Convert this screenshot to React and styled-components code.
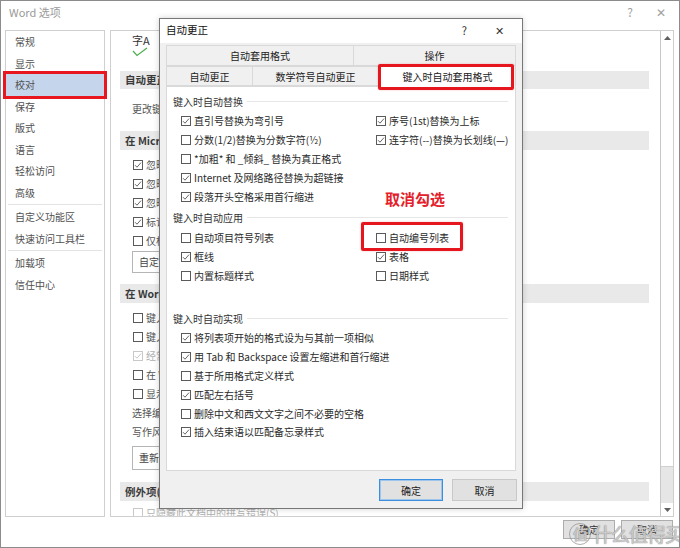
import React from "react";
import styled, { createGlobalStyle } from "styled-components";

const FONT = `"Noto Sans CJK SC", "Noto Sans", sans-serif`;

const Global = createGlobalStyle`
  html, body { margin: 0; padding: 0; background: #fff; }
  body { font-family: ${FONT}; }
  * { box-sizing: border-box; }
`;

const Window = styled.div`
  position: relative;
  width: 680px;
  height: 548px;
  border: 1px solid #8c8c8c;
  background: #fff;
  display: flex;
  flex-direction: column;
  font-family: ${FONT};
  font-size: 10px;
  color: #444;
  overflow: hidden;
`;

const TitleBar = styled.div`
  height: 29px;
  flex: none;
  display: flex;
  align-items: flex-start;
  padding: 4px 13px 0 8px;
  font-size: 11px;
  line-height: 14px;
  color: #9a9a9a;
`;

const TitleControls = styled.div`
  margin-left: auto;
  display: flex;
  gap: 23px;
  color: #a0a0a0;
  font-size: 12px;
`;

const Body = styled.div`
  display: flex;
  gap: 5px;
  height: 487px;
  flex: none;
  padding: 0 5px 0 4px;
`;

const Nav = styled.div`
  width: 100px;
  flex: none;
  border: 1px solid #cfcfcf;
  display: flex;
  flex-direction: column;
`;

const NavItem = styled.div`
  height: 21.5px;
  line-height: 21.5px;
  padding-left: 9px;
  color: #505050;
  font-size: 10px;
  background: ${(p) => (p.$active ? "#c5d6ec" : "transparent")};
  outline: ${(p) => (p.$active ? "3px solid #e8161e" : "none")};
  outline-offset: 0px;
`;

const NavSep = styled.div`
  height: 1px;
  background: #e3e3e3;
  margin: 1px 2px;
`;

const MainPanel = styled.div`
  flex: 1;
  border: 1px solid #cfcfcf;
  display: flex;
  overflow: hidden;
`;

const MainContent = styled.div`
  flex: 1;
  min-width: 0;
  padding: 0 11px 0 9px;
  display: flex;
  flex-direction: column;
  white-space: nowrap;
  overflow: hidden;
`;

const IconBlock = styled.div`
  margin: 3px 0 0 12px;
  height: 28px;
  display: flex;
  flex-direction: column;
  align-items: flex-start;
  color: #333;
  font-size: 11px;
  line-height: 13px;
`;

const Bar = styled.div`
  margin-top: ${(p) => p.$mt}px;
  height: ${(p) => p.$h || 19}px;
  line-height: ${(p) => p.$h || 19}px;
  background: #e9e9e9;
  padding-left: 5px;
  font-weight: bold;
  font-size: 10.5px;
  color: #3a3a3a;
  flex: none;
`;

const PanelText = styled.div`
  margin-top: ${(p) => p.$mt || 0}px;
  height: 19px;
  line-height: 19px;
  padding-left: 12px;
  color: #555;
  flex: none;
`;

const PanelRow = styled.div`
  margin-top: ${(p) => p.$mt || 0}px;
  height: 19px;
  display: flex;
  align-items: center;
  gap: 3px;
  padding-left: 13px;
  color: ${(p) => (p.$faded ? "#b0b0b0" : "#555")};
  flex: none;
`;

const PanelButton = styled.div`
  margin: ${(p) => p.$mt}px 0 0 12px;
  height: ${(p) => p.$h || 22}px;
  line-height: ${(p) => (p.$h || 22) - 2}px;
  border: 1px solid #b5b5b5;
  background: #fff;
  padding: 0 6px;
  align-self: flex-start;
  color: #444;
  flex: none;
`;

const ScrollBar = styled.div`
  width: 13px;
  flex: none;
  border-left: 1px solid #c8c8c8;
  background: #e6e6e6;
  display: flex;
  flex-direction: column;
`;

const ScrollArrow = styled.div`
  height: 13px;
  background: #fff;
  display: flex;
  align-items: center;
  justify-content: center;
  flex: none;
`;

const ScrollThumb = styled.div`
  height: 423px;
  background: #fff;
  border-bottom: 1px solid #d0d0d0;
  flex: none;
`;

const Spacer = styled.div`
  flex: 1;
`;

const Footer = styled.div`
  flex: 1;
  display: flex;
  justify-content: flex-end;
  align-items: flex-start;
  gap: 6px;
  padding: 3px 6px 0 0;
`;

const FooterButton = styled.div`
  width: 52px;
  height: 19px;
  line-height: 17px;
  text-align: center;
  border: 1px solid #adadad;
  background: #e1e1e1;
  color: #333;
`;

const Watermark = styled.div`
  position: absolute;
  right: -4px;
  bottom: 1px;
  display: flex;
  align-items: center;
  gap: 2px;
  font-size: 19px;
  line-height: 24px;
  color: rgba(255, 255, 255, 0.55);
  text-shadow: 0 0 1px #8a8a8a, 0 0 1px #8a8a8a;
  pointer-events: none;
  letter-spacing: -1px;
`;

const WaterCircle = styled.span`
  width: 22px;
  height: 22px;
  border-radius: 50%;
  border: 1px solid rgba(140, 140, 140, 0.7);
  display: inline-flex;
  align-items: center;
  justify-content: center;
  font-size: 15px;
`;

/* ---------- dialog ---------- */

const Dialog = styled.div`
  position: absolute;
  left: 158px;
  top: 17px;
  width: 364px;
  height: 491px;
  border: 1px solid #777;
  background: #f0f0f0;
  box-shadow: 0 0 6px rgba(0, 0, 0, 0.18);
  display: flex;
  flex-direction: column;
  color: #222;
`;

const DialogTitle = styled.div`
  height: 24px;
  flex: none;
  background: #fff;
  display: flex;
  align-items: center;
  padding: 0 18px 3px 6px;
  font-size: 10.5px;
  color: #111;
`;

const DialogControls = styled.div`
  margin-left: auto;
  display: flex;
  align-items: center;
  gap: 28px;
  color: #333;
  font-size: 11px;
`;

const Tabs = styled.div`
  padding: 2px 6px 0 6px;
  display: flex;
  flex-direction: column;
  flex: none;
`;

const TabRow = styled.div`
  display: flex;
  height: ${(p) => p.$h}px;
  align-items: flex-end;
`;

const Tab = styled.div`
  width: ${(p) => p.$w}px;
  height: ${(p) => (p.$active ? p.$h + 2 : p.$h)}px;
  margin-bottom: ${(p) => (p.$active ? -1 : 0)}px;
  position: relative;
  z-index: ${(p) => (p.$active ? 2 : 1)};
  display: flex;
  align-items: center;
  justify-content: center;
  border: 1px solid #d9d9d9;
  border-left-width: ${(p) => (p.$first || p.$active ? 1 : 0)}px;
  border-bottom-color: ${(p) => (p.$active ? "#fff" : "#d9d9d9")};
  background: ${(p) => (p.$active ? "#fff" : "#f0f0f0")};
  font-size: 10px;
  color: #222;
`;

const TabPanel = styled.div`
  margin: 0 6px;
  height: 385px;
  flex: none;
  background: #fff;
  border: 1px solid #d9d9d9;
  padding: 6px 0 0 6px;
  display: flex;
  flex-direction: column;
`;

const SectionHeader = styled.div`
  margin-top: ${(p) => p.$mt || 0}px;
  height: 16px;
  display: flex;
  align-items: center;
  font-size: 10px;
  color: #333;
  padding-right: 7px;
  &::after {
    content: "";
    flex: 1;
    height: 1px;
    background: #e6e6e6;
    margin-left: 4px;
  }
`;

const OptionGrid = styled.div`
  margin-top: ${(p) => p.$mt || 1}px;
  padding-left: 8px;
  display: grid;
  grid-template-columns: 195px 1fr;
  grid-auto-rows: 18.8px;
`;

const Option = styled.div`
  grid-column: ${(p) => p.$col || "auto"};
  display: flex;
  align-items: center;
  gap: 3px;
  font-size: 10px;
  line-height: 14px;
  color: #2a2a2a;
  white-space: nowrap;
`;

const Box = styled.span`
  width: 10px;
  height: 10px;
  flex: none;
  border: 1px solid ${(p) => (p.$faded ? "#c8c8c8" : "#5a5a5a")};
  background: #fff;
  display: inline-flex;
  align-items: center;
  justify-content: center;
`;

const DialogButtons = styled.div`
  margin-top: 8px;
  display: flex;
  justify-content: flex-end;
  gap: 9px;
  padding-right: 5px;
`;

const DialogButton = styled.div`
  width: ${(p) => p.$w}px;
  height: 22px;
  display: flex;
  align-items: center;
  justify-content: center;
  background: #e1e1e1;
  border: 1px solid ${(p) => (p.$primary ? "#3c8fde" : "#c8c8c8")};
  box-shadow: ${(p) => (p.$primary ? "inset 0 0 0 1px #9ec5ec" : "none")};
  font-size: 10px;
  color: #222;
`;

const RedBox = styled.div`
  position: absolute;
  left: ${(p) => p.$x}px;
  top: ${(p) => p.$y}px;
  width: ${(p) => p.$w}px;
  height: ${(p) => p.$h}px;
  border: 3px solid #e6161f;
  border-radius: 2px;
  box-shadow: 0 0 2px rgba(230, 22, 31, 0.3);
  pointer-events: none;
  z-index: 5;
`;

const Annotation = styled.div`
  position: absolute;
  left: 225px;
  top: 170px;
  font-size: 15px;
  line-height: 20px;
  font-weight: bold;
  color: #e4202a;
  z-index: 5;
`;

function Check({ faded }) {
  return (
    <svg width="8" height="8" viewBox="0 0 8 8">
      <polyline
        points="1,4.2 3,6.2 7,1.6"
        fill="none"
        stroke={faded ? "#c0c0c0" : "#555"}
        strokeWidth="0.9"
      />
    </svg>
  );
}

function CheckBox({ checked, faded }) {
  return <Box $faded={faded}>{checked && <Check faded={faded} />}</Box>;
}

const navItems = [
  ["常规"], ["显示"], ["校对", true], ["保存"], ["版式"], ["语言"], ["轻松访问"], ["高级"],
];

const replaceOpts = [
  ["直引号替换为弯引号", true],
  ["序号(1st)替换为上标", true],
  ["分数(1/2)替换为分数字符(½)", false],
  ["连字符(--)替换为长划线(—)", true],
];

export default function App() {
  return (
    <>
      <Global />
      <Window>
        <TitleBar>
          Word 选项
          <TitleControls>
            <span>?</span>
            <span>✕</span>
          </TitleControls>
        </TitleBar>
        <Body>
          <Nav>
            {navItems.map(([t, a]) => (
              <NavItem key={t} $active={a}>{t}</NavItem>
            ))}
            <NavSep />
            <NavItem>自定义功能区</NavItem>
            <NavItem>快速访问工具栏</NavItem>
            <NavSep />
            <NavItem>加载项</NavItem>
            <NavItem>信任中心</NavItem>
          </Nav>
          <MainPanel>
            <MainContent>
              <IconBlock>
                <span>字A</span>
                <svg width="16" height="10" viewBox="0 0 16 10">
                  <polyline points="1,4 5,8.5 15,1" fill="none" stroke="#4cae4c" strokeWidth="1.2" />
                </svg>
              </IconBlock>
              <Bar $mt={14} $h={18}>自动更正选项</Bar>
              <PanelText $mt={10}>更改键入时 Word 更正文本和设置文本格式的方式：</PanelText>
              <Bar $mt={13}>在 Microsoft Office 程序中更正拼写时</Bar>
              <PanelRow $mt={5}><CheckBox checked />忽略全部大写的单词(U)</PanelRow>
              <PanelRow><CheckBox checked />忽略包含数字的单词(B)</PanelRow>
              <PanelRow><CheckBox checked />忽略 Internet 和文件地址(F)</PanelRow>
              <PanelRow><CheckBox checked />标记重复单词(R)</PanelRow>
              <PanelRow><CheckBox />仅根据主词典提供建议(I)</PanelRow>
              <PanelButton $mt={1}>自定义词典(C)...</PanelButton>
              <Bar $mt={11}>在 Word 中更正拼写和语法时</Bar>
              <PanelRow $mt={5}><CheckBox />键入时检查拼写(P)</PanelRow>
              <PanelRow><CheckBox />键入时标记语法错误(M)</PanelRow>
              <PanelRow $faded><CheckBox checked faded />经常混淆的单词(N)</PanelRow>
              <PanelRow><CheckBox />在 Word 中随拼写检查语法(H)</PanelRow>
              <PanelRow><CheckBox />显示可读性统计信息(L)</PanelRow>
              <PanelText>选择编辑器将检查的语法和细化内容</PanelText>
              <PanelText>写作风格(W):</PanelText>
              <PanelButton $mt={5} $h={24}>重新检查文档(K)</PanelButton>
              <Bar $mt={12}>例外项(X):</Bar>
              <PanelRow $mt={2} $faded><CheckBox faded />只隐藏此文档中的拼写错误(S)</PanelRow>
            </MainContent>
            <ScrollBar>
              <ScrollArrow>
                <svg width="7" height="4" viewBox="0 0 7 4"><polygon points="0,4 3.5,0 7,4" fill="#606060" /></svg>
              </ScrollArrow>
              <ScrollThumb />
              <Spacer />
              <ScrollArrow>
                <svg width="7" height="4" viewBox="0 0 7 4"><polygon points="0,0 3.5,4 7,0" fill="#606060" /></svg>
              </ScrollArrow>
            </ScrollBar>
          </MainPanel>
        </Body>
        <Footer>
          <FooterButton>确定</FooterButton>
          <FooterButton>取消</FooterButton>
        </Footer>
        <Watermark>
          <WaterCircle>值</WaterCircle>
          <span>什么值得买</span>
        </Watermark>

        <Dialog>
          <DialogTitle>
            自动更正
            <DialogControls>
              <span>?</span>
              <span>✕</span>
            </DialogControls>
          </DialogTitle>
          <Tabs>
            <TabRow $h={21}>
              <Tab $w={188} $h={21} $first>自动套用格式</Tab>
              <Tab $w={162} $h={21}>操作</Tab>
            </TabRow>
            <TabRow $h={20}>
              <Tab $w={87} $h={20} $first>自动更正</Tab>
              <Tab $w={126} $h={20}>数学符号自动更正</Tab>
              <Tab $w={137} $h={20} $active>键入时自动套用格式</Tab>
            </TabRow>
          </Tabs>
          <TabPanel>
            <SectionHeader>键入时自动替换</SectionHeader>
            <OptionGrid $mt={3}>
              {replaceOpts.map(([t, c]) => (
                <Option key={t}><CheckBox checked={c} />{t}</Option>
              ))}
              <Option $col="1 / span 2"><CheckBox />*加粗* 和 _倾斜_ 替换为真正格式</Option>
              <Option $col="1 / span 2"><CheckBox checked />Internet 及网络路径替换为超链接</Option>
              <Option $col="1 / span 2"><CheckBox checked />段落开头空格采用首行缩进</Option>
            </OptionGrid>
            <SectionHeader $mt={4}>键入时自动应用</SectionHeader>
            <OptionGrid $mt={3}>
              <Option><CheckBox />自动项目符号列表</Option>
              <Option><CheckBox />自动编号列表</Option>
              <Option><CheckBox checked />框线</Option>
              <Option><CheckBox checked />表格</Option>
              <Option><CheckBox />内置标题样式</Option>
              <Option><CheckBox />日期样式</Option>
            </OptionGrid>
            <SectionHeader $mt={25.6}>键入时自动实现</SectionHeader>
            <OptionGrid $mt={2}>
              <Option $col="1 / span 2"><CheckBox checked />将列表项开始的格式设为与其前一项相似</Option>
              <Option $col="1 / span 2"><CheckBox checked />用 Tab 和 Backspace 设置左缩进和首行缩进</Option>
              <Option $col="1 / span 2"><CheckBox />基于所用格式定义样式</Option>
              <Option $col="1 / span 2"><CheckBox checked />匹配左右括号</Option>
              <Option $col="1 / span 2"><CheckBox />删除中文和西文文字之间不必要的空格</Option>
              <Option $col="1 / span 2"><CheckBox checked />插入结束语以匹配备忘录样式</Option>
            </OptionGrid>
          </TabPanel>
          <DialogButtons>
            <DialogButton $w={64} $primary>确定</DialogButton>
            <DialogButton $w={65}>取消</DialogButton>
          </DialogButtons>
          <RedBox $x={218} $y={45} $w={136} $h={26} />
          <RedBox $x={201} $y={203} $w={102} $h={29} />
          <Annotation>取消勾选</Annotation>
        </Dialog>
      </Window>
    </>
  );
}
